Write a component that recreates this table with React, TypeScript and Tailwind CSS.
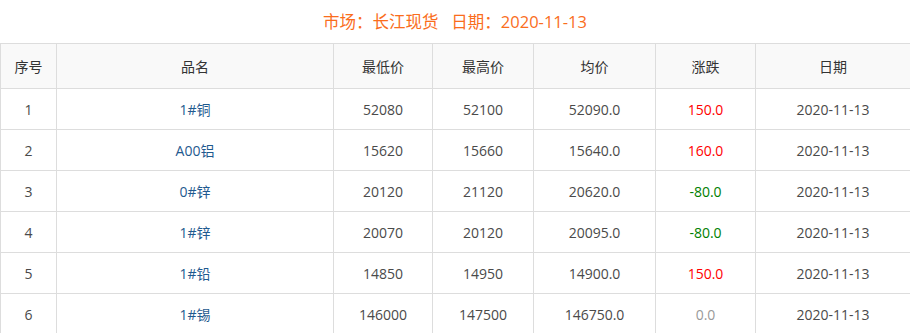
const rows = [
  { id: 1, name: '1#铜', low: '52080', high: '52100', avg: '52090.0', chg: '150.0', date: '2020-11-13' },
  { id: 2, name: 'A00铝', low: '15620', high: '15660', avg: '15640.0', chg: '160.0', date: '2020-11-13' },
  { id: 3, name: '0#锌', low: '20120', high: '21120', avg: '20620.0', chg: '-80.0', date: '2020-11-13' },
  { id: 4, name: '1#锌', low: '20070', high: '20120', avg: '20095.0', chg: '-80.0', date: '2020-11-13' },
  { id: 5, name: '1#铅', low: '14850', high: '14950', avg: '14900.0', chg: '150.0', date: '2020-11-13' },
  { id: 6, name: '1#锡', low: '146000', high: '147500', avg: '146750.0', chg: '0.0', date: '2020-11-13' },
];

const heads = ['序号', '品名', '最低价', '最高价', '均价', '涨跌', '日期'];

function chgColor(v: string) {
  if (v.startsWith('-')) return 'text-[#008000]';
  if (parseFloat(v) === 0) return 'text-[#999999]';
  return 'text-[#ff0000]';
}

const cell = 'flex items-center justify-center border-r border-b border-[#dddddd]';

export default function App() {
  return (
    <div className="w-[910px] h-[333px] overflow-hidden bg-white font-['Open_Sans','Noto_Sans_CJK_SC',sans-serif] text-[14px]">
      <div className="h-[43px] flex items-center justify-center text-[16.5px] text-[#fa6d1c] pt-[1px]">
        市场：长江现货&nbsp;&nbsp;&nbsp;日期：2020-11-13
      </div>
      <div className="w-[911px] grid grid-cols-[56px_277px_99px_101px_122px_100px_155px] border-l border-t border-[#dddddd]">
        {heads.map((h) => (
          <div key={h} className={`${cell} h-[45px] bg-[#f9f9f9] text-[#333333]`}>
            {h}
          </div>
        ))}
        {rows.map((r) => (
          <div key={r.id} className="contents">
            <div className={`${cell} h-[41px] text-[#4a4a4a]`}>{r.id}</div>
            <div className={`${cell} h-[41px] text-[#1f5a8f]`}>{r.name}</div>
            <div className={`${cell} h-[41px] text-[#4a4a4a]`}>{r.low}</div>
            <div className={`${cell} h-[41px] text-[#4a4a4a]`}>{r.high}</div>
            <div className={`${cell} h-[41px] text-[#4a4a4a]`}>{r.avg}</div>
            <div className={`${cell} h-[41px] ${chgColor(r.chg)}`}>{r.chg}</div>
            <div className={`${cell} h-[41px] text-[#4a4a4a]`}>{r.date}</div>
          </div>
        ))}
      </div>
    </div>
  );
}
